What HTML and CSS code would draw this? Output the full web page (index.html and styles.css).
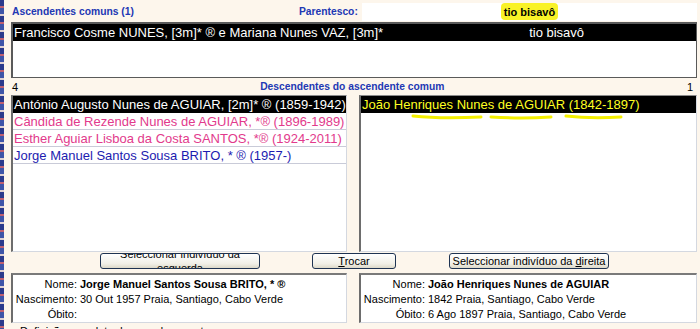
FILE: index.html
```html
<!DOCTYPE html>
<html lang="pt">
<head>
    <meta charset="UTF-8">
    <title>Parentesco</title>
    <link rel="stylesheet" href="styles.css">
</head>
<body>
<div class="app">
    <div class="side-strip"></div>

    <div class="panel">

        <!-- Ascendentes comuns -->
        <div class="head-row">
            <span class="caption">Ascendentes comuns (1)</span>
            <span class="caption parentesco-label">Parentesco:</span>
            <div class="parentesco-field"><span class="marker">tio bisavô</span></div>
        </div>

        <div class="listbox top-list">
            <div class="row selected">
                <span class="ascendentes">Francisco Cosme NUNES, [3m]* ® e Mariana Nunes VAZ, [3m]*</span>
                <span class="grau">tio bisavô</span>
            </div>
        </div>

        <!-- Descendentes -->
        <div class="count-row">
            <span class="count">4</span>
            <span class="caption">Descendentes do ascendente comum</span>
            <span class="count count-right">1</span>
        </div>

        <div class="lists">
            <div class="listbox desc-list">
                <div class="row selected">António Augusto Nunes de AGUIAR, [2m]* ® (1859-1942)</div>
                <div class="row female">Cândida de Rezende Nunes de AGUIAR, *® (1896-1989)</div>
                <div class="row female">Esther Aguiar Lisboa da Costa SANTOS, *® (1924-2011)</div>
                <div class="row male">Jorge Manuel Santos Sousa BRITO, * ® (1957-)</div>
            </div>
            <div class="listbox desc-list">
                <div class="row selected yellow">João Henriques Nunes de AGUIAR (1842-1897)</div>
                <svg class="scribble" width="240" height="8" viewBox="0 0 240 8">
                    <path d="M2 3 Q30 6 70 4 M80 4 Q110 6 140 4 M155 3 Q180 6 210 4" stroke="#f5f000" stroke-width="3" fill="none" stroke-linecap="round"/>
                </svg>
            </div>
        </div>

        <!-- Botoes -->
        <div class="buttons">
            <button class="btn btn-left">Seleccionar indivíduo da esquerda</button>
            <button class="btn btn-mid"><u>T</u>rocar</button>
            <button class="btn btn-right">Seleccionar indivíduo da <u>d</u>ireita</button>
        </div>

        <!-- Detalhes -->
        <div class="lists">
            <div class="info">
                <span class="lbl">Nome:</span><b>Jorge Manuel Santos Sousa BRITO, * ®</b>
                <span class="lbl">Nascimento:</span><span>30 Out 1957 Praia, Santiago, Cabo Verde</span>
                <span class="lbl">Óbito:</span><span></span>
            </div>
            <div class="info">
                <span class="lbl">Nome:</span><b>João Henriques Nunes de AGUIAR</b>
                <span class="lbl">Nascimento:</span><span>1842 Praia, Santiago, Cabo Verde</span>
                <span class="lbl">Óbito:</span><span>6 Ago 1897 Praia, Santiago, Cabo Verde</span>
            </div>
        </div>

        <p class="footnote">Definição completa do grau de parentesco</p>
    </div>
</div>
</body>
</html>
```

FILE: styles.css
```css
body {
    margin: 0;
    background-color: #fdf6ec;
    font-family: Tahoma, "Liberation Sans", Arial, sans-serif;
    font-size: 11px;
    color: #000;
    overflow: hidden;
}

.app {
    display: flex;
    height: 329px;
}

.side-strip {
    width: 4px;
    flex-shrink: 0;
    background: repeating-linear-gradient(180deg, #2b3a8c 0 6px, #c06070 6px 8px, #3f55a8 8px 14px, #e0d0d0 14px 16px);
}

.panel {
    flex: 1;
    padding-left: 7px;
    padding-right: 3px;
}

.caption {
    font-weight: bold;
    font-size: 10.3px;
    color: #2238b4;
}

/* top header */
.head-row {
    display: flex;
    align-items: center;
    height: 22px;
}

.head-row > .caption:first-child {
    margin-left: 1px;
}

.parentesco-label {
    margin-left: 165px;
    width: 63px;
}

.parentesco-field {
    flex: 1;
    height: 18px;
    margin-top: 1px;
    background-color: #fff;
    display: flex;
    justify-content: center;
    align-items: center;
}

.marker {
    font-weight: bold;
    background-color: #f9f227;
    padding: 3px 3px 2px;
    border-radius: 4px;
}

/* list boxes */
.listbox {
    background-color: #fff;
    box-sizing: border-box;
    font-family: "Liberation Sans", Arial, sans-serif;
    font-size: 13px;
}

.top-list {
    height: 56px;
    border: 1px solid #5a5a5a;
    border-top-width: 2px;
    border-left-width: 2px;
}

.row {
    height: 17px;
    line-height: 17px;
    padding-left: 1px;
    white-space: nowrap;
    overflow: hidden;
}

.selected {
    background-color: #000;
    color: #fff;
}

.top-list .row {
    display: flex;
}

.grau {
    margin-left: 146px;
}

.count-row {
    display: flex;
    align-items: center;
    height: 17px;
    padding: 0 4px 0 1px;
}

.count-row .caption {
    margin-left: 242px;
}

.count-right {
    margin-left: auto;
}

.lists {
    display: grid;
    grid-template-columns: 336px 338px;
    column-gap: 12px;
}

.desc-list {
    height: 157px;
    position: relative;
    border: 1px solid #d4d8e0;
    border-top-color: #8a8a8a;
    border-left: 2px solid #6d6d6d;
}

.desc-list .row {
    border-bottom: 1px solid #c9cbd8;
    height: 16px;
    line-height: 17px;
}

.desc-list .selected {
    border-bottom: none;
    height: 17px;
}

.female {
    color: #e23a8c;
}

.male {
    color: #1c1cb0;
}

.yellow {
    color: #ffff22;
}

.scribble {
    position: absolute;
    left: 50px;
    top: 17px;
}

/* buttons */
.buttons {
    height: 20px;
    position: relative;
    margin-top: 1px;
}

.btn {
    position: absolute;
    top: 0;
    height: 16px;
    padding: 0;
    font-family: Tahoma, "Liberation Sans", Arial, sans-serif;
    font-size: 11px;
    color: #000;
    border: 1px solid #1e3352;
    border-radius: 3px;
    background: linear-gradient(#ffffff, #f1efe6 70%, #dcd8c8);
    overflow: hidden;
    line-height: 13px;
}

.btn-left {
    left: 89px;
    width: 160px;
    display: flex;
    flex-direction: column;
    justify-content: center;
    align-items: center;
    padding: 0 14px;
    line-height: 14px;
}

.btn-mid {
    left: 301px;
    width: 84px;
}

.btn-right {
    left: 438px;
    width: 160px;
}

/* info boxes */
.info {
    height: 50px;
    background-color: #fff;
    box-sizing: border-box;
    border: 1px solid #d4d8e0;
    border-top: 2px solid #7a7a7a;
    border-left: 2px solid #6d6d6d;
    display: grid;
    grid-template-columns: 64px 1fr;
    column-gap: 3px;
    align-content: start;
    padding-top: 2px;
    line-height: 15px;
}

.info .lbl {
    text-align: right;
}

.footnote {
    margin: 2px 0 0 9px;
    line-height: 13px;
}
```
